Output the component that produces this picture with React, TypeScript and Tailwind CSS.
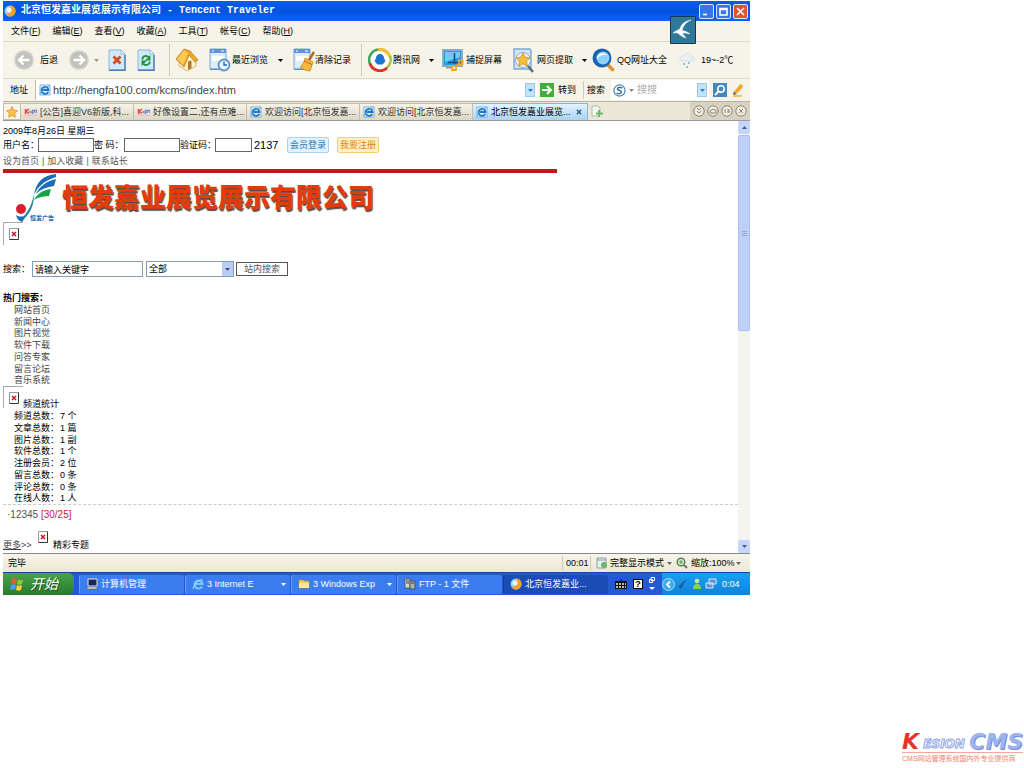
import React from "react";

type Kids = { children?: React.ReactNode };

const Caret = ({ className = "fill-black" }: { className?: string }) => (
  <svg viewBox="0 0 5 3" className={"h-[3px] w-[5px] shrink-0 " + className} aria-hidden="true">
    <path d="M0 0h5L2.5 3z" />
  </svg>
);

const Sep = ({ className = "" }: { className?: string }) => (
  <span className={"shrink-0 border-l border-[#cfcbb8] " + className} />
);

const Arrow = ({ flip = false }: { flip?: boolean }) => (
  <svg viewBox="0 0 20 20" className="size-5" aria-hidden="true">
    <circle cx="10" cy="10" r="9.8" fill="#cfcfcc" />
    <circle cx="10" cy="10" r="8" fill="#c0c0bd" />
    <path
      d="M15.500 10H6M9.500 5.500 5 10l4.500 4.500"
      transform={flip ? "rotate(180 10 10)" : undefined}
      fill="none"
      stroke="#fff"
      strokeWidth="2.400"
    />
  </svg>
);

const PageFrame = ({ children }: Kids) => (
  <svg viewBox="0 0 18 22" className="h-[22px] w-[18px]" aria-hidden="true">
    <path d="M1 1h12l4 4v16H1z" fill="#cfe9fb" stroke="#8db4da" />
    <path d="M1 21.300h16V6" fill="none" stroke="#4d7cb5" strokeWidth="1.400" />
    <path d="M13 1v4h4z" fill="#fff" stroke="#7fa9d4" strokeWidth=".7" />
    {children}
  </svg>
);

const HomeIcon = () => (
  <svg viewBox="0 0 24 24" className="size-6" aria-hidden="true">
    <path d="M4 12v6l8 5 9-5v-6l-6-7z" fill="#fdf3cc" stroke="#c79a48" strokeWidth=".7" />
    <path d="M1 11 9 1l6 2 8 9-3 2-6-7-5 12z" fill="#f5a623" stroke="#c07817" strokeWidth=".8" />
    <path d="m2 11 7-9 4 3-5 12z" fill="#ffcb55" />
    <path d="M13 14.500c0-2 3.500-3 3.500-.5v6L13 22z" fill="#b5762c" />
  </svg>
);

const DocIcon = ({ children }: Kids) => (
  <svg viewBox="0 0 22 24" className="h-6 w-[22px]" aria-hidden="true">
    <path d="M1 1h16v20H1z" fill="#dceefb" stroke="#7ea7d8" />
    <path d="M1 1h16v4H1z" fill="#5f92da" />
    <path d="M3 3h2M12 3h3" stroke="#fff" />
    <path d="M3 8h12v5H3z" fill="#fff" />
    <path d="M1 21.300h12" stroke="#4d7cb5" />
    {children}
  </svg>
);

const ClockDoc = () => (
  <DocIcon>
    <circle cx="15" cy="17" r="5.500" fill="#e8f3fd" stroke="#5b93d0" strokeWidth="1.800" />
    <path d="M15 13.500V17h3" fill="none" stroke="#2f5d9c" strokeWidth="1.300" />
  </DocIcon>
);

const BroomDoc = () => (
  <DocIcon>
    <path d="m21 4-5 8" stroke="#b5651d" strokeWidth="2.400" />
    <path d="m12 10 8 4-3 9c-4 0-7-2-10-4 3-2 4-5 5-9z" fill="#f6b93a" stroke="#c4861a" strokeWidth=".8" />
    <path d="m11 13 8 3.500" stroke="#d4502a" />
  </DocIcon>
);

const StarDoc = () => (
  <svg viewBox="0 0 22 25" className="h-[25px] w-[22px]" aria-hidden="true">
    <path d="M1 1h16l1 2v18H1z" fill="#cfe5fa" stroke="#7ea7d8" strokeWidth="1.400" />
    <circle cx="10" cy="12" r="7.500" fill="#e8f4fd" stroke="#9aabba" />
    <path d="m10 5 2.200 4.200 4.600.7-3.300 3.300.8 4.700-4.300-2.200-4.300 2.200.8-4.700-3.300-3.300 4.600-.7z" fill="#f9bd3c" stroke="#cf8b1a" strokeWidth=".8" />
    <path d="m15 18 5 6" stroke="#5e7079" strokeWidth="2.600" />
  </svg>
);

const QQIcon = () => (
  <svg viewBox="0 0 24 24" className="size-6" aria-hidden="true">
    <circle cx="12" cy="12" r="11" fill="#fff" />
    <path d="M2 16A10.500 10.500 0 0 1 10 1.500" fill="none" stroke="#43a55b" strokeWidth="2.600" />
    <path d="M10 1.700A10.500 10.500 0 0 1 22 9" fill="none" stroke="#eebf30" strokeWidth="3.400" />
    <path d="M22 8A10.500 10.500 0 0 1 18 20.500" fill="none" stroke="#a3c63f" strokeWidth="2.400" />
    <path d="M19 20A10.500 10.500 0 0 1 2 15.500" fill="none" stroke="#d9362c" strokeWidth="3" />
    <path d="M12 6.500c-2.500 0-3.500 1.500-3.500 3.500L7 13.500l1.500.5c-.5 1 .5 2 1.500 2h4c1 0 2-1 1.500-2l1.500-.5L15.500 10c0-2-1-3.500-3.500-3.500z" fill="#1b75d0" stroke="#1b75d0" />
  </svg>
);

const CaptureIcon = () => (
  <svg viewBox="0 0 22 24" className="h-6 w-[22px]" aria-hidden="true">
    <path d="M1 2h19v16H1z" fill="#2c9bdc" stroke="#8ba9c8" strokeWidth="1.800" />
    <path d="M3 4h15v5L3 14z" fill="#74c8f4" />
    <path d="M4 19.500h7" stroke="#8d99a6" strokeWidth="2" />
    <path d="M12.500 5v11M6 14.500h13" stroke="#134a80" strokeWidth="1.500" />
    <path d="M10 18h4v4h-4zM17 12.500h3.500v4H17zM13 18l5-2" fill="none" stroke="#eba62a" strokeWidth="1.800" />
  </svg>
);

const BigSearch = () => (
  <svg viewBox="0 0 23 24" className="h-6 w-[23px]" aria-hidden="true">
    <path d="m15 16 5.500 5.500" stroke="#dc9637" strokeWidth="3.800" strokeLinecap="round" />
    <circle cx="10" cy="10" r="9.500" fill="#1b62b4" />
    <circle cx="11" cy="10" r="6.500" fill="#8fd0f8" />
    <path d="M5 11c-1-5 6-8 11-4-5-1-9 0-11 4z" fill="#fff" />
  </svg>
);

const WeatherIcon = () => (
  <svg viewBox="0 0 18 18" className="size-[18px]" aria-hidden="true">
    <path d="M2 9c-1-3 2-5 4-4 1-4 7-4 7 0 4 0 5 4 2 5H4z" fill="#e9eff5" stroke="#d0dbe6" strokeWidth=".7" />
    <path d="M6 12v2M11 11v2M9 15v2" stroke="#9cc0e4" strokeWidth="2" />
  </svg>
);

const IEIcon = ({ className = "size-[13px]" }: { className?: string }) => (
  <svg viewBox="0 0 13 13" className={"shrink-0 " + className} aria-hidden="true">
    <path d="M1 1h11v11H1z" fill="#d8ecfa" stroke="#6fa3cf" strokeWidth=".8" />
    <path d="M10 8.500A3.800 3.800 0 1 1 10.300 6.500H4" fill="none" stroke="#1e76c4" strokeWidth="1.900" />
    <path d="M1 11C3 6 8 2 12 2" fill="none" stroke="#4aa6e6" strokeWidth=".9" />
  </svg>
);

const TTIcon = () => (
  <svg viewBox="0 0 12 12" className="size-3 shrink-0" aria-hidden="true">
    <circle cx="6" cy="6" r="5.500" fill="#8fd0f8" />
    <path d="M6 .5a5.500 5.500 0 1 1-5 8c4 1 8-3 5-8z" fill="#f4a223" />
    <circle cx="5" cy="5" r="2.500" fill="#eaf7ff" />
  </svg>
);

const MiniLogo = () => (
  <svg viewBox="0 0 13 8" className="h-2 w-[13px] shrink-0" aria-hidden="true">
    <path d="M1.500 1v5M5 1 2 3.500 5 5.500" fill="none" stroke="#e8483f" strokeWidth="1.500" />
    <path d="M5 4h2M8 2.500h1.500M8 2.500V5h1.500M10 5V2.500h2.500V5" fill="none" stroke="#6d86d8" strokeWidth="1.300" />
    <path d="M0 7.300h13" stroke="#f2a9a2" strokeWidth=".7" />
  </svg>
);

const DropBox = () => (
  <span className="flex h-[14px] w-[10px] shrink-0 items-center justify-center border border-[#9cc8ea] bg-[#c3e3f9]">
    <Caret className="fill-[#2f7fc4]" />
  </span>
);

const Broken = () => (
  <svg viewBox="0 0 10 12" className="h-3 w-[10px]" role="img" aria-label="图片">
    <path d="M.5 11.500V.5h9" fill="none" stroke="#999" />
    <path d="M9.500.5v11H.5" fill="none" stroke="#333" />
    <path d="m3 4 4 4M7 4 3 8" stroke="#c8102e" strokeWidth="1.500" />
  </svg>
);

const WinButton = ({ label, red, children }: Kids & { label: string; red?: boolean }) => (
  <button
    aria-label={label}
    className={
      "flex size-[15px] items-center justify-center rounded-xs border border-[#dbe6fb] " +
      (red ? "bg-[#df5335]" : "bg-[#3b74e8]")
    }
  >
    <svg viewBox="0 0 9 9" className="size-[9px]" fill="none" stroke="#fff" strokeWidth="1.600" aria-hidden="true">
      {children}
    </svg>
  </button>
);

const menus = ["文件(F)", "编辑(E)", "查看(V)", "收藏(A)", "工具(T)", "帐号(C)", "帮助(H)"];

const tabs = [
  { text: "[公告]喜迎V6新版,科...", kind: "cms" },
  { text: "好像设置二,还有点难...", kind: "cms" },
  { text: "欢迎访问[北京恒发嘉...", kind: "ie" },
  { text: "欢迎访问[北京恒发嘉...", kind: "ie" },
];

const hot = ["网站首页", "新闻中心", "图片视觉", "软件下载", "问答专家", "留言论坛", "音乐系统"];

const stats = [
  ["频道总数：", "7 个"],
  ["文章总数：", "1 篇"],
  ["图片总数：", "1 副"],
  ["软件总数：", "1 个"],
  ["注册会员：", "2 位"],
  ["留言总数：", "0 条"],
  ["评论总数：", "0 条"],
  ["在线人数：", "1 人"],
];

function TitleBar() {
  return (
    <header className="flex h-5 items-center gap-[5px] bg-linear-to-b from-[#0a5be8] via-[#0453dd] to-[#0a62fb] pr-[2px] pl-[1px] text-white">
      <TTIcon />
      <h1 className="grow truncate font-['Liberation_Mono','Noto_Sans_CJK_SC',monospace] text-[10px] leading-4 font-bold">
        北京恒发嘉业展览展示有限公司 - Tencent Traveler
      </h1>
      <div className="flex gap-[2px]">
        <WinButton label="最小化"><path d="M1 7.500h4" /></WinButton>
        <WinButton label="最大化"><path d="M1 1.500h7v6.500H1zM1 2.500h7" /></WinButton>
        <WinButton label="关闭" red><path d="m1 1 7 7M8 1 1 8" /></WinButton>
      </div>
    </header>
  );
}

function MenuBar() {
  return (
    <nav className="relative flex h-[21px] items-center gap-3 border-b border-[#dcd8c8] pl-2">
      {menus.map((m) => (
        <button key={m} className="whitespace-nowrap">
          {m.slice(0, 3)}
          <u>{m[3]}</u>)
        </button>
      ))}
      <svg viewBox="0 0 26 28" className="absolute -top-[5px] right-[54px] z-10 h-7 w-[26px]" role="img" aria-label="飞鸟">
        <path d="M.5.500h25v27H.5z" fill="#2f7899" stroke="#17384c" />
        <path d="M21 4c-6 1-10 4-11 9-2 1-5 2-7 4 3-.5 5 0 6 1 2 2 4 3 7 4l-4-5c3 0 5 0 8 1-2-2-5-3-8-3.500C13 10 16 6 21 4z" fill="#fff" stroke="#fff" strokeWidth=".5" />
      </svg>
    </nav>
  );
}

function Toolbar() {
  return (
    <div className="flex h-[37px] items-center overflow-hidden border-b border-[#dcd8c8] pl-[11px] whitespace-nowrap">
      <button className="flex items-center">
        <span className="w-[26px]"><Arrow /></span>
        <span className="w-[29px] text-left">后退</span>
      </button>
      <button aria-label="前进" className="w-[25px]"><Arrow flip /></button>
      <span className="w-[14px]"><Caret className="fill-[#999]" /></span>
      <button aria-label="停止" className="w-[29px]">
        <PageFrame><path d="m5.500 7.500 7 7M12.500 7.500l-7 7" stroke="#d9481f" strokeWidth="2.800" /></PageFrame>
      </button>
      <button aria-label="刷新" className="w-8">
        <PageFrame>
          <path d="M5.500 10.500V9c1-2.500 5-2.500 6.500-.5M12.500 12.500V14c-1 2.500-5 2.500-6.500.5" fill="none" stroke="#22963b" strokeWidth="2" />
          <path d="M13.500 6v5.500H8zM4.500 17v-5.500H10z" fill="#22963b" />
        </PageFrame>
      </button>
      <Sep className="h-8 w-[6px]" />
      <button aria-label="主页" className="w-[34px]"><HomeIcon /></button>
      <button className="flex items-center">
        <span className="w-[23px]"><ClockDoc /></span>
        <span className="w-[46px] text-left">最近浏览</span>
        <span className="w-[15px]"><Caret /></span>
      </button>
      <button className="flex items-center">
        <span className="w-[22px]"><BroomDoc /></span>
        <span className="w-[46px] text-left">清除记录</span>
      </button>
      <Sep className="h-8 w-[7px]" />
      <button className="flex items-center">
        <span className="w-[25px]"><QQIcon /></span>
        <span className="w-[36px] text-left">腾讯网</span>
        <span className="w-[13px]"><Caret /></span>
      </button>
      <button className="flex items-center">
        <span className="w-6"><CaptureIcon /></span>
        <span className="w-[47px] text-left">捕捉屏幕</span>
      </button>
      <button className="flex items-center">
        <span className="w-6"><StarDoc /></span>
        <span className="w-[45px] text-left">网页提取</span>
        <span className="w-[10px]"><Caret /></span>
      </button>
      <button className="flex items-center">
        <span className="w-[25px]"><BigSearch /></span>
        <span className="w-[61px] text-left">QQ网址大全</span>
      </button>
      <button className="flex items-center">
        <span className="w-[23px]"><WeatherIcon /></span>
        <span>19~-2℃</span>
      </button>
    </div>
  );
}

function AddressBar() {
  return (
    <div className="flex h-[23px] items-center border-b border-[#b5b2a4] whitespace-nowrap">
      <label htmlFor="addr" className="w-[32px] shrink-0 pl-[7px]">地址</label>
      <div className="flex h-5 min-w-0 grow items-center gap-[2px] border-l border-[#bdbaa9] bg-white pr-[3px] pl-[3px]">
        <IEIcon className="size-3" />
        <input
          id="addr"
          defaultValue="http://hengfa100.com/kcms/index.htm"
          className="min-w-0 grow bg-transparent text-[11px] text-[#444] outline-none"
        />
        <DropBox />
      </div>
      <button className="flex w-[45px] shrink-0 items-center gap-1 pl-[2px]">
        <svg viewBox="0 0 14 14" className="size-[14px]" aria-hidden="true">
          <path d="M0 0h14v14H0z" fill="#3fae3b" />
          <path d="M2 7h9M7 3l4 4-4 4" fill="none" stroke="#fff" strokeWidth="2" />
        </svg>
        转到
      </button>
      <Sep className="h-[18px] w-1" />
      <label htmlFor="soso" className="w-6 shrink-0">搜索</label>
      <div className="flex h-5 w-[98px] shrink-0 items-center gap-[3px] bg-white px-[2px]">
        <svg viewBox="0 0 14 14" className="size-[13px] shrink-0" aria-hidden="true">
          <circle cx="7" cy="7" r="6" fill="#fff" stroke="#4a86b8" strokeWidth="1.300" />
          <path d="M10 4.500C8 3 4 3.500 5 6c1 1 4 .5 4 2.500S5 11 4 9.500" fill="none" stroke="#2f6c9e" strokeWidth="1.500" />
        </svg>
        <Caret className="fill-[#888]" />
        <input id="soso" placeholder="搜搜" className="min-w-0 grow bg-transparent text-[10px] outline-none placeholder:text-[#aaa]" />
        <DropBox />
      </div>
      <button aria-label="搜索" className="ml-1 shrink-0">
        <svg viewBox="0 0 14 14" className="size-[14px]" aria-hidden="true">
          <path d="M0 0h14v14H0z" fill="#4289bd" />
          <circle cx="8" cy="6" r="3.200" fill="none" stroke="#fff" strokeWidth="1.500" />
          <path d="m6 8-4 4" stroke="#fff" strokeWidth="1.800" />
        </svg>
      </button>
      <button aria-label="高亮" className="mr-[6px] ml-1 shrink-0">
        <svg viewBox="0 0 13 13" className="size-[13px]" aria-hidden="true">
          <path d="m11 1-6 7" stroke="#f0a62c" strokeWidth="3.500" />
          <path d="m3 7 3 3-4 1z" fill="#8a5a20" />
          <path d="M2 12h9" stroke="#e8b52c" strokeWidth="1.500" />
        </svg>
      </button>
    </div>
  );
}

function TabBar() {
  return (
    <div className="flex h-[19px] items-end border-b border-[#999] bg-[#ece8d8] whitespace-nowrap">
      <button aria-label="收藏" className="flex h-[17px] w-[18px] shrink-0 items-center justify-center border border-[#c2beac] bg-[#f7f4ea]">
        <svg viewBox="0 0 12 12" className="size-3" aria-hidden="true">
          <path d="m6 .5 1.700 3.600 3.800.5-2.800 2.700.7 4L6 9.400l-3.400 1.900.7-4L.5 4.600l3.800-.5z" fill="#fbc04a" stroke="#d38b22" strokeWidth=".7" />
        </svg>
      </button>
      {tabs.map((t, i) => (
        <button
          key={i}
          className="flex h-[17px] min-w-0 shrink basis-[113px] items-center gap-[3px] border-t border-r border-[#c2beac] bg-linear-to-b from-[#f6f3e8] to-[#dcd7c4] pl-[3px] text-[#333]"
        >
          {t.kind === "cms" ? <MiniLogo /> : <IEIcon className="size-3" />}
          <span className="overflow-hidden">{t.text}</span>
        </button>
      ))}
      <button className="flex h-[17px] min-w-0 shrink basis-[115px] items-center gap-[3px] border-t border-r border-[#87b6dc] bg-linear-to-b from-[#e3f3fe] to-[#a8d4f4] pl-[3px]">
        <IEIcon className="size-3" />
        <span className="grow overflow-hidden text-left">北京恒发嘉业展览...</span>
        <svg viewBox="0 0 7 7" className="mr-[5px] size-[6px] shrink-0" aria-hidden="true">
          <path d="m1 1 5 5M6 1 1 6" stroke="#33597a" strokeWidth="1.700" />
        </svg>
      </button>
      <button aria-label="新标签" className="mb-[2px] ml-[3px] shrink-0">
        <svg viewBox="0 0 12 13" className="h-[13px] w-3" fill="none" aria-hidden="true">
          <path d="M1 1h6l2 2v8H1z" fill="#f1f7ee" stroke="#a9bfa4" />
          <path d="M8 5v7M5 8.500h7" stroke="#75b967" strokeWidth="2" />
        </svg>
      </button>
      <div className="ml-auto flex h-full shrink-0 items-center gap-[2px] bg-[#d8d2c0] px-[3px]">
        {["m4 3 2 2 2-2M4 6l2 2 2-2", "M3 8h6V5H7L6 4 3 6z", "M4 4v4M7 4v4M8 4v4", "m4 4 4 4M8 4 4 8"].map((d) => (
          <button key={d} aria-label="标签操作">
            <svg viewBox="0 0 12 12" className="size-3" fill="none" stroke="#8a8577" aria-hidden="true">
              <circle cx="6" cy="6" r="5.200" fill="#efebdf" />
              <path d={d} />
            </svg>
          </button>
        ))}
      </div>
    </div>
  );
}

const CompanyLogo = () => (
  <svg viewBox="0 0 42 48" className="h-12 w-[42px] shrink-0" role="img" aria-label="恒发广告">
    <path d="M41 0C28 1 21 8 19 21c3-7 9-14 22-18z" fill="#1b6db5" />
    <path d="M41 5c-10 2-17 8-20 15 5-5 11-7 18-8z" fill="#1b6db5" />
    <path d="M36 15c-8 1-13 4-17 11 5-3 10-4 15-4z" fill="#17a34a" />
    <path d="M19 20c0 9-2 16-8 23l-2-1c5-6 8-12 10-22z" fill="#1a8b9c" />
    <circle cx="6" cy="35" r="5" fill="#dd1f2d" />
    <path d="M1 41c3 2 7 2 11 0l-5 7c-3-1-5-3-6-7z" fill="#1b6db5" />
    <text x="15" y="46" fontSize="6" fontWeight="700" fill="#1b6db5" fontFamily="Noto Sans CJK SC, sans-serif">恒发广告</text>
  </svg>
);

function Content() {
  const field = "h-[14px] border border-[#666] bg-white px-1 outline-none";
  return (
    <main className="flex min-h-[432px] bg-white">
      <div className="min-w-0 grow pt-1">
        <p className="h-3">2009年8月26日 星期三</p>
        <form className="flex h-[15px] items-center whitespace-nowrap">
          <label htmlFor="user" className="w-[35px]">用户名：</label>
          <input id="user" className={field + " w-[56px]"} />
          <label htmlFor="pass" className="w-[30px]">密 码：</label>
          <input id="pass" type="password" className={field + " w-[56px]"} />
          <label htmlFor="code" className="w-[35px]">验证码：</label>
          <input id="code" className={field + " w-[37px]"} />
          <span className="w-[35px] pl-[2px] text-[11px] tabular-nums">2137</span>
          <button type="button" className="h-4 w-[42px] rounded-xs border border-[#a9d4ef] bg-[#e3f3fd] text-[#2676b5]">会员登录</button>
          <button type="button" className="ml-2 h-4 w-[42px] rounded-xs border border-[#f5cd76] bg-[#fff0c4] text-[#e2851c]">我要注册</button>
        </form>
        <p className="flex h-[17px] items-center gap-[3px] text-[#555]">
          <a href="#home">设为首页</a><span>|</span><a href="#fav">加入收藏</a><span>|</span><a href="#contact">联系站长</a>
        </p>
        <div className="h-1 w-full max-w-[554px] bg-[#cb1417]" />
        <div className="flex h-[49px] items-center gap-[5px] pl-3">
          <CompanyLogo />
          <h2 className="text-[26px] leading-8 font-black whitespace-nowrap text-[#e23c0c] [text-shadow:1px_2px_1px_#5c4a40]">
            恒发嘉业展览展示有限公司
          </h2>
        </div>
        <div className="flex h-[23px] w-5 items-center justify-center border-t border-l border-[#aaa]"><Broken /></div>
        <form className="mt-4 flex h-4 items-center whitespace-nowrap">
          <label htmlFor="kw" className="w-[29px]">搜索：</label>
          <input id="kw" defaultValue="请输入关键字" className="h-4 w-[111px] border border-[#7f9db9] px-[2px] outline-none" />
          <span className="relative ml-[3px] flex h-4 w-[88px] items-center border border-[#7f9db9]">
            <select aria-label="搜索范围" className="h-full w-full appearance-none pl-[2px] outline-none">
              <option>全部</option>
            </select>
            <span className="pointer-events-none absolute right-0 flex h-[14px] w-[11px] items-center justify-center bg-[#bccdf5]">
              <Caret className="fill-[#3b5078]" />
            </span>
          </span>
          <button type="button" className="ml-[2px] h-[14px] w-[52px] border border-[#555] text-[#555]">站内搜索</button>
        </form>
        <h3 className="mt-[15px] h-3 font-bold">热门搜索：</h3>
        <ul className="grid h-[82px] auto-rows-fr pl-[11px] text-[#444]">
          {hot.map((h) => (
            <li key={h}><a href="#hot">{h}</a></li>
          ))}
        </ul>
        <div className="flex h-[24px] items-end">
          <span className="flex h-[22px] w-5 items-center justify-center self-start border-t border-l border-[#aaa]"><Broken /></span>
          频道统计
        </div>
        <ul className="grid h-[95px] auto-rows-fr border-b border-dashed border-[#ccc] pl-[11px]">
          {stats.map(([k, v]) => (
            <li key={k} className="flex gap-[1px]"><span>{k}</span><span>{v}</span></li>
          ))}
        </ul>
        <p className="mt-1 h-[14px] pl-1 text-[10px] text-[#555]">
          ·12345 <span className="text-[#cc2222]">[30/25]</span>
        </p>
        <div className="mt-2 flex h-5 items-end">
          <a href="#more" className="w-[35px] text-[#444]"><u>更多</u>&gt;&gt;</a>
          <span className="w-[15px] self-start"><Broken /></span>
          精彩专题
        </div>
      </div>
      <div className="flex w-3 shrink-0 flex-col bg-[#f5f5f0]" aria-hidden="true">
        <span className="flex h-[13px] items-center justify-center rounded-xs bg-[#c5d5fb]"><Caret className="rotate-180 fill-[#41598c]" /></span>
        <span className="mt-px flex h-[196px] flex-col items-center justify-center gap-px rounded-xs border border-[#a9bdf0] bg-[#bfd0f8]">
          <i className="h-px w-[5px] bg-[#8ea6dc]" /><i className="h-px w-[5px] bg-[#8ea6dc]" /><i className="h-px w-[5px] bg-[#8ea6dc]" />
        </span>
        <span className="mt-auto flex h-[13px] items-center justify-center rounded-xs bg-[#c5d5fb]"><Caret className="fill-[#41598c]" /></span>
      </div>
    </main>
  );
}

function StatusBar() {
  return (
    <div className="flex h-[19px] items-center border-t border-[#888] bg-linear-to-b from-[#f7f5ea] to-[#ece8d6] pr-[9px] pl-[5px] whitespace-nowrap">
      <span className="grow">完毕</span>
      <Sep className="h-[14px] w-1" />
      <span className="w-6">00:01</span>
      <Sep className="h-[14px] w-[6px]" />
      <svg viewBox="0 0 12 12" className="mr-[2px] size-3" aria-hidden="true">
        <path d="M1 1h9v10H1z" fill="#e4f1f1" stroke="#84a4a0" />
        <path d="M1 3h9" stroke="#84a4a0" />
        <circle cx="8" cy="8" r="3" fill="#6db36b" />
      </svg>
      <button className="w-[57px] text-left">完整显示模式</button>
      <Caret className="fill-[#666]" />
      <svg viewBox="0 0 12 12" className="mr-[3px] ml-1 size-3" fill="none" aria-hidden="true">
        <circle cx="5" cy="5" r="3.800" fill="#d4ead2" stroke="#5f7a62" strokeWidth="1.400" />
        <path d="m8 8 3 3" stroke="#5f7a62" strokeWidth="2" />
        <path d="M3 5h4M5 3v4" stroke="#499c47" />
      </svg>
      <button className="w-[45px] text-left">缩放:100%</button>
      <Caret className="fill-[#666]" />
    </div>
  );
}

const Task = ({ icon, children, active, menu }: Kids & { icon: React.ReactNode; active?: boolean; menu?: boolean }) => (
  <button
    className={
      "flex h-[19px] min-w-0 shrink basis-[105px] items-center gap-[3px] rounded-xs border-l pl-[6px] whitespace-nowrap " +
      (active ? "border-[#133c97] bg-[#1b4bb5]" : "border-[#6ba0fa] bg-[#3b7df0]")
    }
  >
    {icon}
    <span className="grow overflow-hidden text-left">{children}</span>
    {menu && <span className="pr-1"><Caret className="fill-white" /></span>}
  </button>
);

function TaskBar() {
  return (
    <footer className="flex h-[23px] items-center border-t border-[#1943a5] bg-[#2359d4] text-white">
      <button className="flex h-full w-[71px] shrink-0 items-center gap-[6px] rounded-r-md bg-linear-to-b from-[#4aa24a] via-[#37903a] to-[#2b7a2e] pl-[7px] text-[14px] italic [text-shadow:1px_1px_1px_#1d4d1d]">
        <svg viewBox="0 0 14 14" className="size-[14px]" aria-hidden="true">
          <path d="M2 2c2-1 3-1 5 0L6 7C4 6 3 6 1 7z" fill="#f0592b" />
          <path d="M8 2.500c2 1 3 1 5 0L12 7c-2 1-3 1-5 0z" fill="#8ccc3f" />
          <path d="M1 8c2-1 3-1 5 0l-1 5c-2-1-3-1-5 0z" fill="#4f9cf5" />
          <path d="M7 8c2 1 3 1 5 0l-1 5c-2 1-3 1-5 0z" fill="#fbce3a" />
        </svg>
        开始
      </button>
      <div className="ml-[5px] flex min-w-0 grow gap-px">
        <Task
          icon={
            <svg viewBox="0 0 12 12" className="size-3 shrink-0" aria-hidden="true">
              <path d="M2 1h9v7H2z" fill="#16285c" stroke="#e8e8e0" />
              <path d="M1 9h10v2H1z" fill="#e8e4d4" stroke="#444" strokeWidth=".5" />
            </svg>
          }
        >
          计算机管理
        </Task>
        <Task icon={<svg viewBox="0 0 12 12" className="size-3 shrink-0" aria-hidden="true"><path d="M10 8.500A4 4 0 1 1 10.500 6H4" fill="none" stroke="#7ccaff" strokeWidth="2" /><path d="M1 11C2 5 8 1 11 2" fill="none" stroke="#b8e2ff" strokeWidth=".9" /></svg>} menu>
          3 Internet E
        </Task>
        <Task icon={<svg viewBox="0 0 12 12" className="size-3 shrink-0" aria-hidden="true"><path d="M1 2h4l1 1h5v7H1z" fill="#f3cf62" stroke="#b98f29" strokeWidth=".7" /><path d="M1 5h10v5H1z" fill="#fbe69a" /></svg>} menu>
          3 Windows Exp
        </Task>
        <Task icon={<svg viewBox="0 0 12 12" className="size-3 shrink-0" aria-hidden="true"><path d="M1 1h5v9H1z" fill="#d6d6cf" stroke="#444" strokeWidth=".7" /><path d="M6 3h5v8H6z" fill="#a9b0a9" stroke="#333" strokeWidth=".7" /><path d="M2 3h3M2 5h3M7 5h3" stroke="#444" /></svg>}>
          FTP - 1 文件
        </Task>
        <Task active icon={<TTIcon />}>北京恒发嘉业...</Task>
      </div>
      <div className="flex w-[54px] shrink-0 items-center gap-[6px] pl-[7px]" aria-hidden="true">
        <svg viewBox="0 0 12 10" className="h-[10px] w-3">
          <path d="M0 2h12v8H0z" fill="#111" />
          <path d="M1 5h10M1 8h10" stroke="#eee" strokeDasharray="2 1" strokeWidth="1.500" />
          <path d="M6 0v2" stroke="#111" />
        </svg>
        <span className="flex size-[10px] items-center justify-center border border-black bg-[#fdfde8] font-bold text-black">?</span>
        <svg viewBox="0 0 6 14" className="h-[14px] w-[6px]" fill="none" stroke="#fff">
          <path d="M2 .5h3.500v3H2zM.5 2.500h3v3h-3z" />
          <path d="M0 10h6l-3 3z" fill="#fff" stroke="none" />
        </svg>
      </div>
      <div className="flex h-full w-[88px] shrink-0 items-center gap-[2px] bg-linear-to-b from-[#1aa0f0] to-[#0f82dc] whitespace-nowrap">
        <svg viewBox="0 0 13 13" className="size-[13px]" aria-hidden="true">
          <circle cx="6.500" cy="6.500" r="6" fill="#3fa9ee" stroke="#a9daf9" />
          <path d="M8 3.500 5 6.500l3 3" fill="none" stroke="#fff" strokeWidth="1.800" />
        </svg>
        <svg viewBox="0 0 12 12" className="size-3" aria-hidden="true"><path d="M1 8c3 0 4-5 10-7-4 3-5 7-7 10z" fill="#1f5c8c" /></svg>
        <svg viewBox="0 0 12 12" className="size-3" aria-hidden="true">
          <circle cx="6" cy="3" r="2.300" fill="#c5ea8c" />
          <path d="M2 11c0-7 8-7 8 0z" fill="#8dce4b" />
        </svg>
        <svg viewBox="0 0 12 12" className="size-3" aria-hidden="true">
          <path d="M4 1h7v5H4zM1 5h7v5H1z" fill="#5f93cc" stroke="#dbe9f6" />
        </svg>
        <time className="ml-[3px]">0:04</time>
      </div>
    </footer>
  );
}

export default function App() {
  return (
    <div className="flex min-h-screen flex-col bg-white font-['Liberation_Sans','Noto_Sans_CJK_SC',sans-serif] text-[9px] leading-3 text-black">
      <div className="pt-px pl-[3px]">
        <div className="w-full max-w-[747px] bg-[#f6f4e8]">
          <TitleBar />
          <MenuBar />
          <Toolbar />
          <AddressBar />
          <TabBar />
          <Content />
          <StatusBar />
          <TaskBar />
        </div>
      </div>
      <div className="mt-auto flex flex-col items-end pr-[1px] pb-[3px]">
        <p className="flex h-5 w-[121px] items-end justify-between border-b border-[#f5a79a] font-['DejaVu_Sans',sans-serif] font-bold italic">
          <span className="text-[22px] leading-5 text-[#e8332c]">K</span>
          <span className="text-[12px] leading-4 text-white [-webkit-text-stroke:1px_#8ea4e6]">ESION</span>
          <span className="text-[22px] leading-5 text-[#9db4f0] [text-shadow:1px_1px_0_#6f8bdc]">CMS</span>
        </p>
        <p className="w-[121px] text-[7px] whitespace-nowrap text-[#f0806c]">CMS网站管理系统国内外专业提供商</p>
      </div>
    </div>
  );
}
